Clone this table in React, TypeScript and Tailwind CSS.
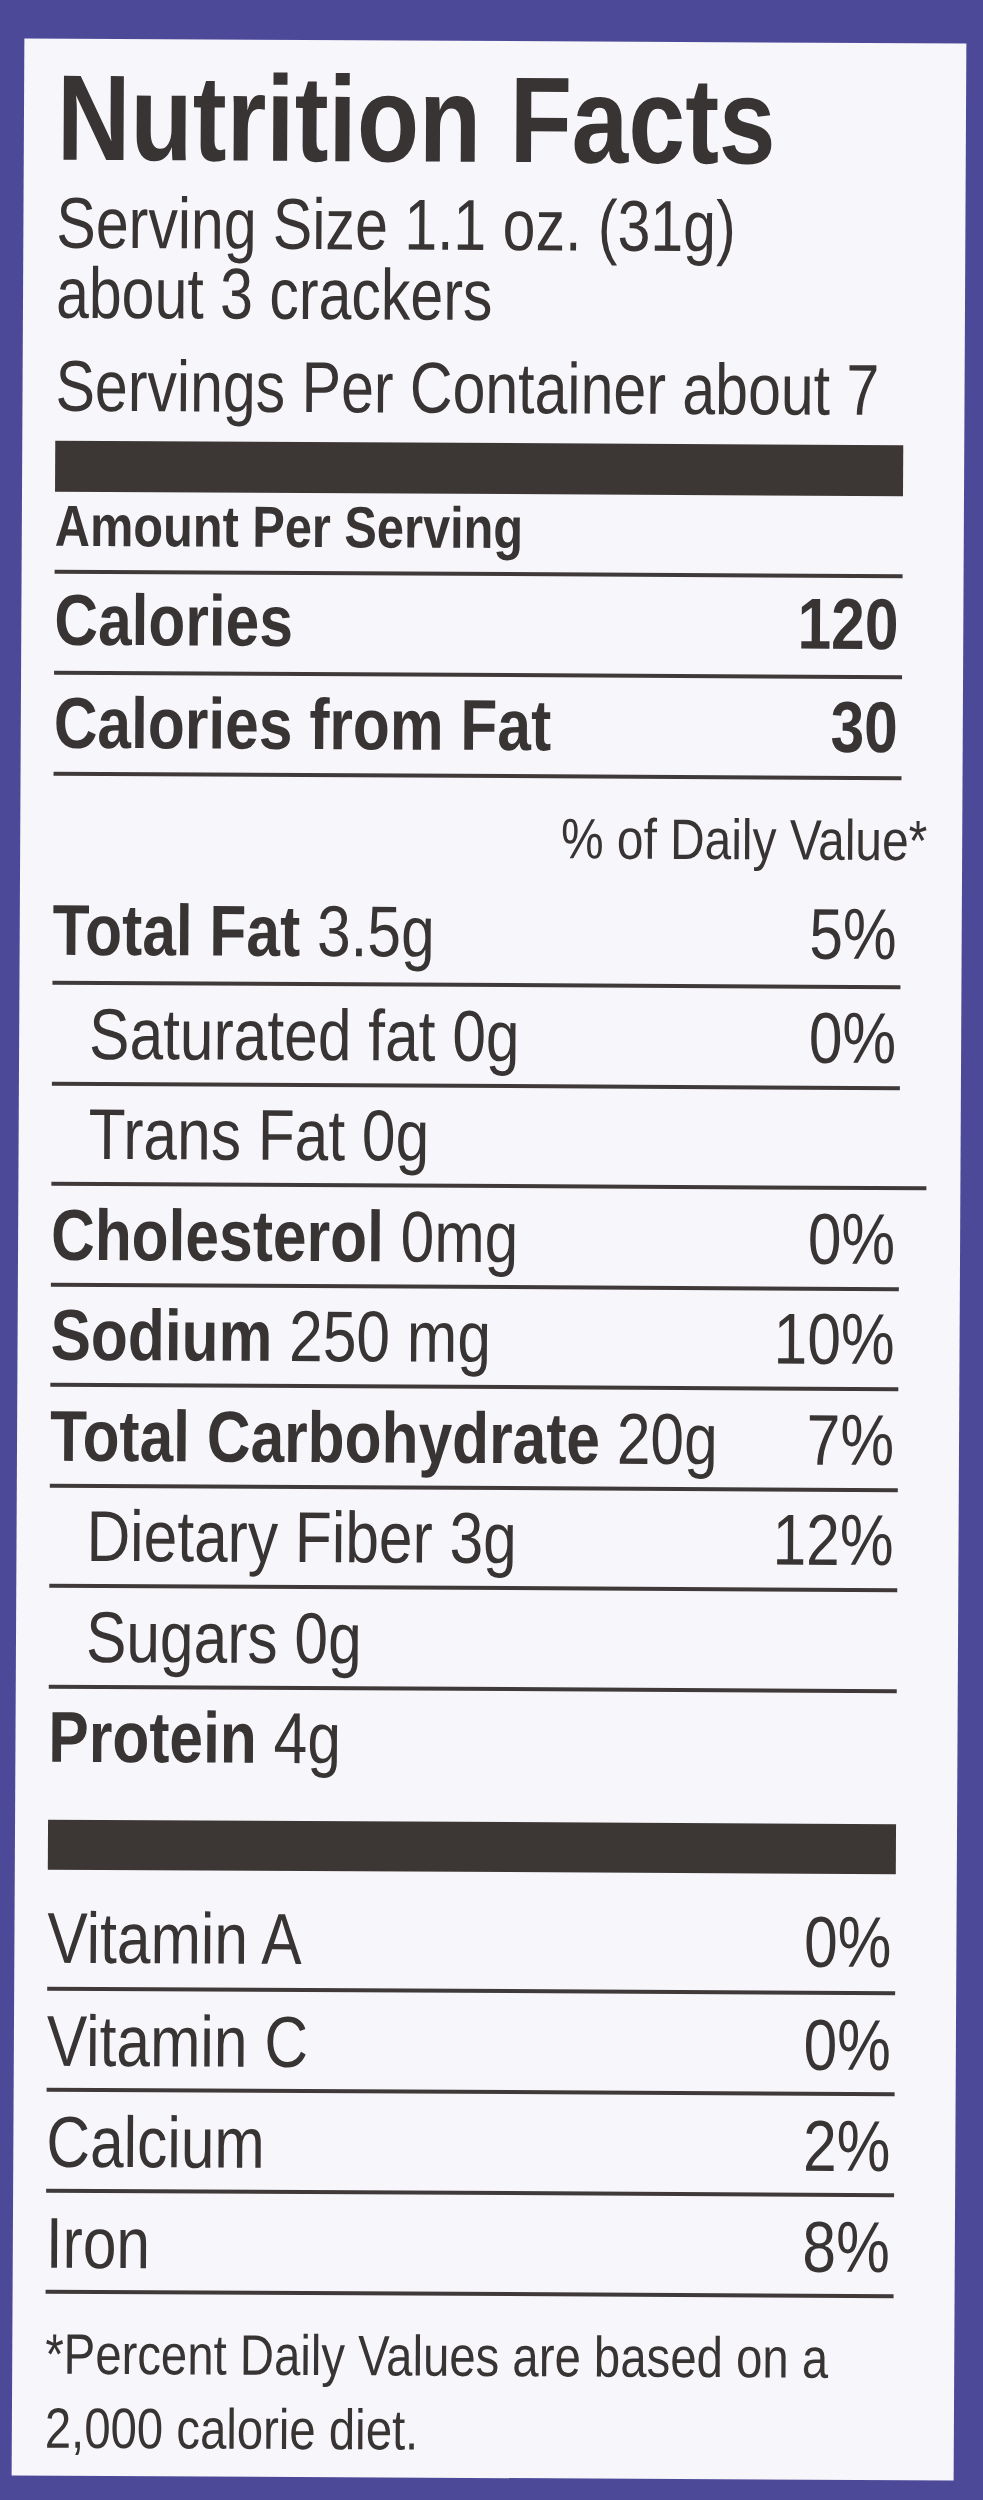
import type { ReactNode } from 'react';

type Nutrient = {
  name: string;
  amount?: string;
  dv?: string;
  sub?: boolean;
  wideRule?: boolean;
};

const nutrients: Nutrient[] = [
  { name: 'Saturated fat', amount: '0g', dv: '0%', sub: true },
  { name: 'Trans Fat', amount: '0g', sub: true, wideRule: true },
  { name: 'Cholesterol', amount: '0mg', dv: '0%' },
  { name: 'Sodium', amount: '250 mg', dv: '10%' },
  { name: 'Total Carbohydrate', amount: '20g', dv: '7%' },
  { name: 'Dietary Fiber', amount: '3g', dv: '12%', sub: true },
  { name: 'Sugars', amount: '0g', sub: true },
];

const vitamins = [
  { name: 'Vitamin A', dv: '0%' },
  { name: 'Vitamin C', dv: '0%' },
  { name: 'Calcium', dv: '2%' },
  { name: 'Iron', dv: '8%' },
];

// the label face is a condensed grotesque; squeeze Liberation Sans to match
function Narrow({ children, right }: { children: ReactNode; right?: boolean }) {
  return (
    <span
      className={
        right
          ? 'inline-block whitespace-nowrap origin-right scale-x-[0.84]'
          : 'inline-block whitespace-nowrap origin-left scale-x-[0.84]'
      }
    >
      {children}
    </span>
  );
}

function Row({ left, right, className }: { left: ReactNode; right?: ReactNode; className: string }) {
  return (
    <div className={`flex ${className}`}>
      <div className="min-w-0 flex-1">{left}</div>
      {right && (
        <div className="shrink-0 pr-1">
          <Narrow right>{right}</Narrow>
        </div>
      )}
    </div>
  );
}

function Label({ item }: { item: Nutrient }) {
  if (item.sub) {
    return (
      <div className="pl-[37px]">
        <Narrow>
          {item.name} {item.amount}
        </Narrow>
      </div>
    );
  }
  return (
    <Narrow>
      <span className="font-bold">{item.name}</span> {item.amount}
    </Narrow>
  );
}

const rule = 'border-b-4 border-[#3f3a39]';

export default function App() {
  return (
    <div className="h-[2500px] w-full overflow-hidden bg-[#4d4999] pt-[41px] pl-[18px] font-['Liberation_Sans',Arial,sans-serif] text-[#383434]">
      <div className="w-[942px] rotate-[0.3deg] bg-[#f7f6fa] pt-[18px] pb-[11px] pl-[33px] pr-[61px]">
        {/* Header */}
        <h1 className="origin-left scale-x-[0.835] text-[122px] leading-none font-bold whitespace-nowrap">
          Nutrition Facts
        </h1>
        <p className="mt-[9px] origin-left scale-x-[0.82] text-[72px] leading-[70px] whitespace-nowrap">
          Serving Size 1.1 oz. (31g)
          <br />
          about 3 crackers
        </p>
        <p className="mt-[22px] origin-left scale-x-[0.82] text-[72px] leading-none whitespace-nowrap">
          Servings Per Container about 7
        </p>

        <div className="mt-[19px] h-[51px] bg-[#3c3735]" />

        {/* Calories */}
        <div className={`${rule} pt-[5px] pb-[15px] text-[58px] leading-none font-bold`}>
          <Narrow>Amount Per Serving</Narrow>
        </div>
        <Row
          className={`${rule} pt-[10px] pb-[15px] text-[72px] leading-none font-bold`}
          left={<Narrow>Calories</Narrow>}
          right="120"
        />
        <Row
          className={`${rule} pt-[12px] pb-[13px] text-[72px] leading-none font-bold`}
          left={<Narrow>Calories from Fat</Narrow>}
          right="30"
        />
        <div className="-mr-[26px] pt-[32px] text-right text-[57px] leading-none">
          <Narrow right>% of Daily Value*</Narrow>
        </div>

        {/* Nutrients */}
        <Row
          className={`${rule} pt-[29px] pb-[15px] text-[72px] leading-none`}
          left={<Label item={{ name: 'Total Fat', amount: '3.5g' }} />}
          right="5%"
        />
        {nutrients.map((n) => (
          <Row
            key={n.name}
            className={
              n.wideRule
                ? `${rule} -mr-[27px] pt-[12.5px] pb-[12px] text-[72px] leading-none`
                : `${rule} pt-[12.5px] pb-[12px] text-[72px] leading-none`
            }
            left={<Label item={n} />}
            right={n.dv}
          />
        ))}
        <div className="pt-[12.5px] text-[72px] leading-none">
          <Label item={{ name: 'Protein', amount: '4g' }} />
        </div>

        <div className="mt-[47px] h-[50px] bg-[#3c3735]" />

        {/* Vitamins */}
        {vitamins.map((v, i) => (
          <Row
            key={v.name}
            className={
              i === 0
                ? `${rule} pt-[32px] pb-[13px] text-[72px] leading-none`
                : `${rule} pt-[14px] pb-[11px] text-[72px] leading-none`
            }
            left={<Narrow>{v.name}</Narrow>}
            right={v.dv}
          />
        ))}

        <p className="origin-left scale-x-[0.83] pt-[23px] text-[57px] leading-[74px] whitespace-nowrap">
          *Percent Daily Values are based on a
          <br />
          2,000 calorie diet.
        </p>
      </div>
    </div>
  );
}
